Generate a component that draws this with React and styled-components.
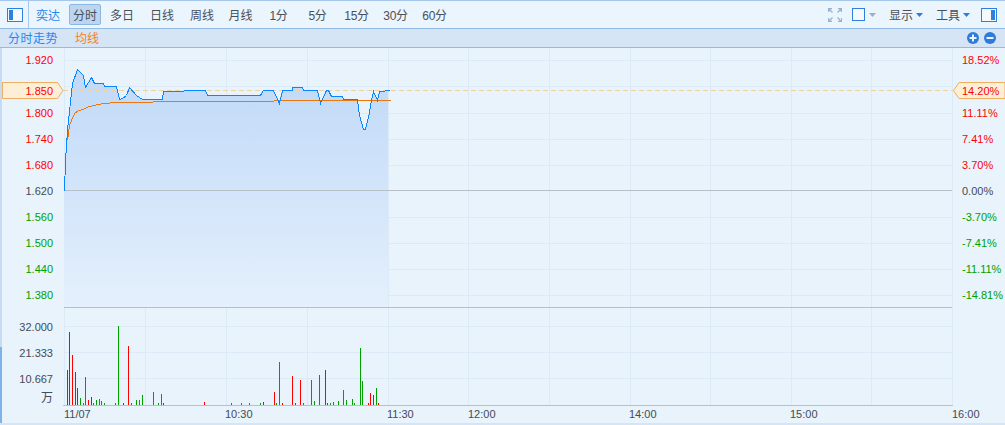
import React from 'react';
import styled, { createGlobalStyle } from 'styled-components';

const Global = createGlobalStyle`
  html, body { margin: 0; padding: 0; background: #e8f3fc; overflow: hidden; }
  * { box-sizing: border-box; }
`;

const CJK = `"Liberation Sans", "Noto Sans CJK SC", sans-serif`;

const Page = styled.div`
  width: 1005px;
  height: 425px;
  display: flex;
  flex-direction: column;
  background: linear-gradient(to bottom, #c6dcf3 347px, #7fb2ea 347px) 0 0 / 2px 100% no-repeat, #e8f3fc;
  font-family: ${CJK};
`;

const Toolbar = styled.div`
  height: 29px;
  flex: none;
  display: flex;
  align-items: center;
  background: #ebf5fe;
  border-top: 1px solid #a6c8ec;
  border-bottom: 1px solid #92bbe6;
`;

const PanelSlot = styled.div`
  width: 29px;
  height: 100%;
  flex: none;
  display: flex;
  align-items: center;
  justify-content: center;
  border-right: 1px solid #a6c8ec;
  padding-left: 2px;
`;

const StockName = styled.span`
  margin: 0 9px 0 7px;
  width: 24px;
  font-size: 12px;
  color: #1f88ee;
  white-space: nowrap;
`;

const Tab = styled.button`
  width: ${p => p.$w || 40}px;
  height: 21px;
  padding: 0;
  margin: ${p => (p.$active ? '0 1px 0 0' : '0')};
  border: 1px solid ${p => (p.$active ? '#8db6e2' : 'transparent')};
  border-radius: 2px;
  background: ${p => (p.$active ? '#bcd6f2' : 'transparent')};
  color: #4a4f5a;
  font-family: ${CJK};
  font-size: 12px;
  letter-spacing: ${p => p.$tight ? '-0.3px' : '0'};
  white-space: nowrap;
`;

const Spacer = styled.div`
  flex: 1;
`;

const RightTool = styled.div`
  display: flex;
  align-items: center;
  gap: ${p => p.$gap || 3}px;
  margin-right: ${p => p.$mr || 0}px;
  font-size: 12px;
  color: #4a4f5a;
  white-space: nowrap;
`;

const SubHeader = styled.div`
  height: 19px;
  flex: none;
  display: flex;
  align-items: center;
  gap: 17px;
  padding: 0 9px 0 8px;
  background: #d6e5f6;
  border-bottom: 1px solid #92bbe6;
`;

const Legend = styled.span`
  font-size: 12px;
  letter-spacing: ${p => p.$spacing || 0}px;
  color: ${p => p.$color};
  margin-top: -2px;
`;

const ZoomGroup = styled.div`
  margin-left: auto;
  display: flex;
  gap: 5px;
`;

const Chart = styled.svg`
  display: block;
  flex: none;
  width: 1005px;
  height: 375px;
`;

const Footer = styled.div`
  height: 2px;
  flex: none;
  background: #d6e5f6;
`;

const AxisText = styled.text`
  font-family: ${CJK};
  font-size: ${p => p.$size || 11}px;
  fill: ${p => p.$color || '#444a56'};
  text-anchor: ${p => p.$anchor || 'start'};
`;

const PRICE_COLORS = { up: '#ff0000', flat: '#444a56', down: '#00a000' };

const leftTicks = [
  ['1.920', 60, 'up'], ['1.800', 113, 'up'], ['1.740', 139, 'up'], ['1.680', 165, 'up'],
  ['1.620', 191, 'flat'], ['1.560', 217, 'down'], ['1.500', 243, 'down'], ['1.440', 269, 'down'], ['1.380', 295, 'down'],
];
const rightTicks = [
  ['18.52%', 60, 'up'], ['11.11%', 113, 'up'], ['7.41%', 139, 'up'], ['3.70%', 165, 'up'],
  ['0.00%', 191, 'flat'], ['-3.70%', 217, 'down'], ['-7.41%', 243, 'down'], ['-11.11%', 269, 'down'], ['-14.81%', 295, 'down'],
];
const volTicks = [['32.000', 326], ['21.333', 352], ['10.667', 378]];
const hLines = [60, 86, 113, 139, 165, 217, 243, 269, 295, 326, 352, 378];
const vLines = [64, 145, 226, 307, 388, 468, 549, 630, 710, 791, 871, 952];
const timeLabels = [['11/07', 64], ['10:30', 225], ['11:30', 387], ['12:00', 468], ['14:00', 629], ['15:00', 790], ['16:00', 952]];

const pricePts = [[64,191],[65,160],[67,130],[68,120],[72,83],[77,69],[83,75],[85,87],[91,77],[94,83],[103,83],[104,86],[116,86],[119,99],[122,98],[126,95],[129,87],[136,95],[142,99],[162,99],[163,91],[205,90],[207,95],[260,95],[263,90],[273,90],[279,103],[282,90],[292,90],[292,87],[302,87],[303,90],[317,90],[320,103],[326,90],[328,90],[331,96],[342,96],[343,99],[357,99],[359,115],[363,129],[365,129],[368,117],[371,100],[373,91],[377,100],[379,91],[390,90]];
const avgPts = [[67,140],[69,125],[71,120],[74,113],[78,110],[83,109],[86,107],[93,105],[103,103],[117,102],[128,102],[177,101],[273,101],[274,100],[300,100],[390,100]];

const bars = [
  [67,370,'r'],[69,332,'r'],[72,355,'r'],[75,372,'r'],[77,388,'r'],[80,398,'g'],[83,403,'g'],[85,377,'g'],[88,400,'r'],[91,397,'r'],[93,403,'g'],[96,400,'g'],[99,399,'g'],[101,401,'g'],[104,403,'g'],[115,403,'g'],[118,326,'g'],[123,403,'r'],[128,346,'r'],[131,403,'g'],[136,400,'g'],[139,400,'g'],[142,395,'g'],[153,392,'g'],[158,403,'g'],[161,394,'g'],[163,403,'r'],
  [204,402,'r'],[231,403,'g'],[241,403,'g'],[249,403,'g'],[260,403,'g'],[263,402,'r'],[274,392,'r'],[276,403,'g'],[279,362,'g'],[282,403,'r'],[292,376,'r'],[295,403,'r'],[300,380,'r'],[303,403,'g'],[311,380,'g'],[314,401,'g'],[319,375,'g'],[325,370,'r'],[327,403,'r'],[330,403,'g'],[333,402,'g'],[338,401,'g'],[343,390,'g'],[346,400,'g'],[352,399,'g'],[354,403,'g'],[360,348,'g'],[362,381,'g'],[368,403,'r'],[370,393,'r'],[373,395,'r'],[376,388,'g'],[378,403,'r'],
];

const toPoints = pts => pts.map(p => p.join(',')).join(' ');
const toLinePoints = pts => pts.map(([x, y]) => `${x + 0.5},${y + 0.5}`).join(' ');

function PanelIcon({ side }) {
  return (
    <svg width="16" height="14" viewBox="0 0 16 14">
      <rect x="0.5" y="0.5" width="15" height="13" fill="#f4f9fe" stroke="#2f80dc" />
      <rect x={side === 'left' ? 2 : 10} y="2" width="4" height="10" fill="#2f80dc" />
    </svg>
  );
}

function Caret({ color }) {
  return (
    <svg width="7" height="4" viewBox="0 0 7 4">
      <path d="M0 0H7L3.5 4Z" fill={color} />
    </svg>
  );
}

function FullscreenIcon() {
  return (
    <svg width="14" height="14" viewBox="0 0 14 14" fill="none" stroke="#9ab3cd" strokeWidth="1.3">
      <path d="M0.5 4V0.5H4M1 1L4.5 4.5M10 0.5H13.5V4M13 1L9.5 4.5M0.5 10V13.5H4M1 13L4.5 9.5M10 13.5H13.5V10M13 13L9.5 9.5" />
    </svg>
  );
}

function RoundButton({ plus }) {
  return (
    <svg width="12" height="12" viewBox="0 0 12 12">
      <circle cx="6" cy="6" r="6" fill="#2f7bd8" />
      <rect x="2.5" y="5" width="7" height="2" fill="#eaf4fe" />
      {plus && <rect x="5" y="2.5" width="2" height="7" fill="#eaf4fe" />}
    </svg>
  );
}

export default function App() {
  const fillPts = [[64, 307], ...pricePts.filter(p => p[0] < 389), [388, 90], [388, 307]];
  return (
    <Page>
      <Global />
      <Toolbar>
        <PanelSlot><PanelIcon side="left" /></PanelSlot>
        <StockName>奕达</StockName>
        <Tab $active $w={32}>分时</Tab>
        <Tab>多日</Tab>
        <Tab>日线</Tab>
        <Tab>周线</Tab>
        <Tab $w={37}>月线</Tab>
        <Tab $w={39} $tight>1分</Tab>
        <Tab $w={39} $tight>5分</Tab>
        <Tab $w={39} $tight>15分</Tab>
        <Tab $w={39} $tight>30分</Tab>
        <Tab $w={39} $tight>60分</Tab>
        <Spacer />
        <RightTool $mr={10}><FullscreenIcon /></RightTool>
        <RightTool $mr={13} $gap={4}>
          <svg width="13" height="13" viewBox="0 0 13 13"><rect x="0.5" y="0.5" width="12" height="12" fill="#f4f9fe" stroke="#2f80dc" /></svg>
          <Caret color="#9ab0c8" />
        </RightTool>
        <RightTool $mr={13}>显示<Caret color="#2f7bd8" /></RightTool>
        <RightTool $mr={11}>工具<Caret color="#2f7bd8" /></RightTool>
        <RightTool $mr={8}><PanelIcon side="right" /></RightTool>
      </Toolbar>
      <SubHeader>
        <Legend $color="#1f88ee" $spacing={0.5}>分时走势</Legend>
        <Legend $color="#f5820f">均线</Legend>
        <ZoomGroup>
          <RoundButton plus />
          <RoundButton />
        </ZoomGroup>
      </SubHeader>
      <Chart viewBox="0 48 1005 375" shapeRendering="crispEdges">
        <defs>
          <linearGradient id="area" gradientUnits="userSpaceOnUse" x1="0" y1="70" x2="0" y2="307">
            <stop offset="0" stopColor="#c0d9f8" />
            <stop offset="1" stopColor="#e4f0fc" />
          </linearGradient>
        </defs>
        {hLines.map(y => <rect key={y} x="64" width="888" y={y} height="1" fill="#dce9f6" />)}
        {vLines.map(x => <rect key={x} x={x} width="1" y="48" height="357" fill="#dce9f6" />)}
        <polygon points={toPoints(fillPts)} fill="url(#area)" />
        <rect x="64" width="888" y="190" height="1" fill="#b6bec6" />
        <rect x="64" width="888" y="307" height="1" fill="#b6bec6" />
        <line x1="63" x2="953" y1="90.5" y2="90.5" stroke="#f0d29a" strokeDasharray="5 3" />
        <polyline points={toLinePoints(avgPts)} fill="none" stroke="#e8780f" strokeWidth="1" />
        <polyline points={toLinePoints(pricePts)} fill="none" stroke="#0a84ff" strokeWidth="1" />
        {bars.map(([x, top, c]) => (
          <rect key={x} x={x} y={top} width="1" height={405 - top} fill={c === 'r' ? '#ff0000' : '#00a000'} />
        ))}
        <rect x="63" y="405" width="890" height="1" fill="#a9c4de" />
        <g shapeRendering="auto">
          {leftTicks.map(([t, y, k]) => (
            <AxisText key={t} x="53" y={y + 4} $anchor="end" $color={PRICE_COLORS[k]}>{t}</AxisText>
          ))}
          {rightTicks.map(([t, y, k]) => (
            <AxisText key={t} x="962" y={y + 4} $color={PRICE_COLORS[k]}>{t}</AxisText>
          ))}
          {volTicks.map(([t, y]) => (
            <AxisText key={t} x="53" y={y + 5} $anchor="end">{t}</AxisText>
          ))}
          <AxisText x="53" y="402" $anchor="end" $size={12}>万</AxisText>
          {timeLabels.map(([t, x]) => (
            <AxisText key={t} x={x} y="418">{t}</AxisText>
          ))}
          <polygon points="2.5,82.5 57.5,82.5 63,90.5 57.5,98.5 2.5,98.5" fill="#fdeed6" stroke="#f0ae60" />
          <AxisText x="53" y="95" $anchor="end" $color="#ff0000">1.850</AxisText>
          <polygon points="1005,82.5 959,82.5 953.5,90.5 959,98.5 1005,98.5" fill="#fdeed6" stroke="#f0ae60" />
          <AxisText x="962" y="95" $color="#ff0000">14.20%</AxisText>
        </g>
      </Chart>
      <Footer />
    </Page>
  );
}
